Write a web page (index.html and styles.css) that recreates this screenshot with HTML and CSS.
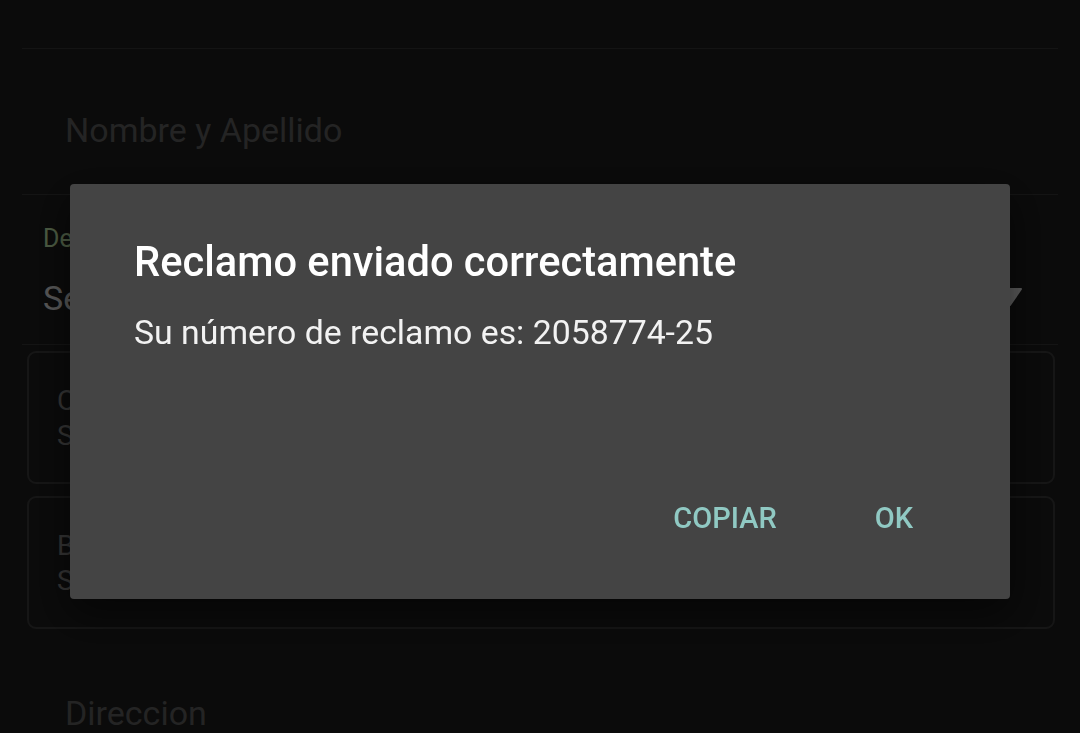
FILE: index.html
```html
<!DOCTYPE html>
<html lang="es">
<head>
<meta charset="utf-8">
<title>Reclamo</title>
<link rel="stylesheet" href="styles.css">
</head>
<body>
<div class="screen">
  <div class="field field-top"></div>
  <div class="field field-name">
    <span class="placeholder">Nombre y Apellido</span>
  </div>
  <div class="field field-select">
    <span class="select-label">Departamento</span>
    <div class="select-row">
      <span class="select-value">Seleccione</span>
      <svg class="select-arrow" width="26" height="18" viewBox="0 0 26 18"><path d="M2 1 H24 L13 17 Z" fill="#e1e1e1" stroke="#e1e1e1" stroke-width="2" stroke-linejoin="round"/></svg>
    </div>
  </div>
  <div class="cards">
    <div class="card">
      <span class="card-line">Categoría</span>
      <span class="card-line">Seleccione</span>
    </div>
    <div class="card">
      <span class="card-line">Barrio</span>
      <span class="card-line">Seleccione</span>
    </div>
  </div>
  <div class="field field-address">
    <span class="placeholder">Direccion</span>
  </div>
</div>

<div class="scrim">
  <div class="dialog">
    <h1 class="dialog-title">Reclamo enviado correctamente</h1>
    <p class="dialog-body">Su número de reclamo es: 2058774-25</p>
    <div class="dialog-actions">
      <button class="dialog-btn">COPIAR</button>
      <button class="dialog-btn">OK</button>
    </div>
  </div>
</div>
</body>
</html>
```

FILE: styles.css
```css
html, body {
  margin: 0;
  padding: 0;
  height: 100%;
  overflow: hidden;
  background: #1c1c1c;
  font-family: Roboto, "Noto Sans", "Liberation Sans", sans-serif;
}

.screen {
  display: flex;
  flex-direction: column;
  padding: 0 22px;
}

.field {
  border-bottom: 1px solid #333333;
  display: flex;
  flex-direction: column;
}

.field-top {
  height: 48px;
}

.field-name {
  height: 146px;
  justify-content: flex-end;
  padding-left: 43px;
  box-sizing: border-box;
  padding-bottom: 44px;
}

.placeholder {
  font-size: 34px;
  line-height: 40px;
  color: #5a5a5a;
}

.field-select {
  height: 150px;
  box-sizing: border-box;
  padding: 29px 0 0 21px;
}

.select-label {
  font-size: 25px;
  line-height: 30px;
  color: #bfe3a8;
}

.select-row {
  display: flex;
  align-items: center;
  justify-content: space-between;
  margin-top: 24px;
}

.select-value {
  font-size: 34px;
  line-height: 40px;
  color: #d8d8d8;
}

.select-arrow {
  margin-right: 35px;
  margin-top: -2px;
}

.cards {
  display: flex;
  flex-direction: column;
  gap: 12px;
  padding: 6px 3px 0 5px;
}

.card {
  height: 133px;
  box-sizing: border-box;
  border: 2px solid #383838;
  border-radius: 9px;
  padding: 30px 0 0 28px;
  display: flex;
  flex-direction: column;
}

.card-line {
  font-size: 28px;
  line-height: 35px;
  color: #828282;
}

.field-address {
  border-bottom: none;
  padding: 64px 0 0 43px;
}

.scrim {
  position: fixed;
  inset: 0;
  background: rgba(0, 0, 0, 0.6);
}

.dialog {
  position: absolute;
  left: 70px;
  top: 184px;
  width: 940px;
  height: 415px;
  box-sizing: border-box;
  background: #444444;
  border-radius: 4px;
  box-shadow: 0 14px 40px rgba(0, 0, 0, 0.55);
  padding: 54px 97px 63px 64px;
  display: flex;
  flex-direction: column;
}

.dialog-title {
  margin: 0;
  font-size: 41.6px;
  line-height: 48px;
  font-weight: 500;
  color: #ffffff;
}

.dialog-body {
  margin: 27px 0 0 0;
  font-size: 33.8px;
  line-height: 40px;
  color: #f2f2f2;
}

.dialog-actions {
  margin-top: auto;
  display: flex;
  justify-content: flex-end;
  gap: 98px;
}

.dialog-btn {
  background: none;
  border: none;
  padding: 0;
  font-family: Roboto, "Noto Sans", "Liberation Sans", sans-serif;
  font-size: 29px;
  line-height: 36px;
  font-weight: 500;
  color: #90c9c3;
}
```
